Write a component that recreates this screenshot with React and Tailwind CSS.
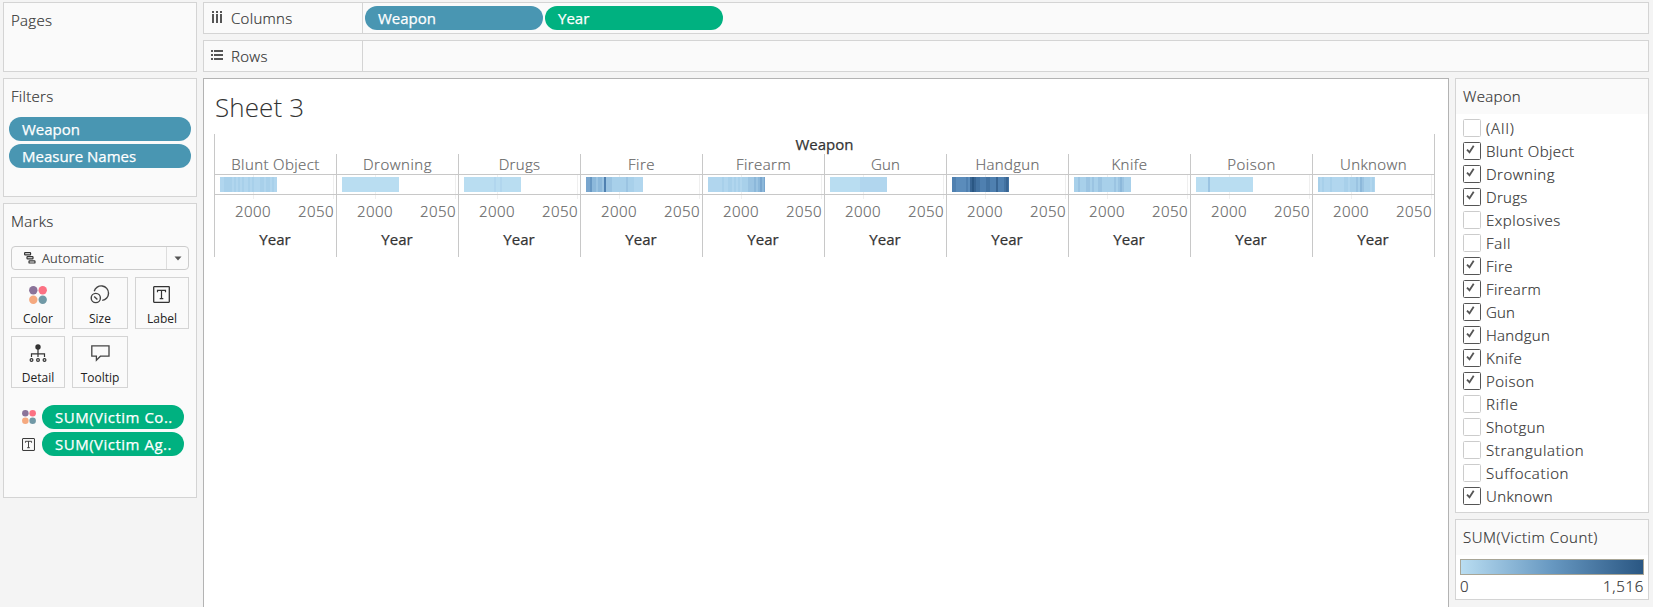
const LABELS = [
  ['Blunt Object', 0.4], ['Drowning', 0.5], ['Drugs', 0.3], ['Fire', 0.5], ['Firearm', 0.45],
  ['Gun', 0.1], ['Handgun', 0.3], ['Knife', 0.5], ['Poison', 0.5], ['Unknown', 0.4],
];

// Each strip: one letter per 2px slice, a step on the color ramp.
const RAMP = {
  a: '#b9ddf1', b: '#b1d6ee', c: '#a8d0ea', d: '#9bc4e2', e: '#8cb8da', f: '#79a6ce',
  g: '#6898c3', h: '#5b8cbb', i: '#4f80b0', j: '#4373a2', k: '#386593', l: '#2a5783',
};
const STRIPS = [
  'bbccccbcbcbcbbcbcbbbccbccbcbb',
  'aaaaaaaaaaaaaaaaaaaaaaaaaaaaa',
  'aaaaaaaaaaaaaaabaabaaaaaaaaaa',
  'ffgeedeedidddcccccccdcccbbbbb',
  'bbbbbbbcbbccbcbcbcccdddedefef',
  'aaaaaaaaaaaaaaabbbbbbbbbbbbbb',
  'iihhhhhihklkjjiiijjiiikiiijkj',
  'ccdcccddcdccddccccccdcdedcccc',
  'aaaaaadaaaaaaaaaaaaaaaaaaaaaa',
  'cbcbbbcbbbbbbccbcccdcedcccbcb',
];

// Name, checked, letter spacing in px.
const ITEMS = [
  ['(All)', 0, 1], ['Blunt Object', 1, 0.4], ['Drowning', 1, 0.5], ['Drugs', 1, 0.3], ['Explosives', 0, 0.55],
  ['Fall', 0, 0.7], ['Fire', 1, 0.5], ['Firearm', 1, 0.45], ['Gun', 1, 0.1], ['Handgun', 1, 0.3],
  ['Knife', 1, 0.5], ['Poison', 1, 0.5], ['Rifle', 0, 0.8], ['Shotgun', 0, 0.4], ['Strangulation', 0, 0.65],
  ['Suffocation', 0, 0.65], ['Unknown', 1, 0.4],
];

const PANEL = 'border border-[#d4d4d4] bg-[#fafafa]';
const BOOK = 'font-light [-webkit-text-stroke:0.2px]';
const HEADING = `leading-5 tracking-[0.3px] text-[#333] ${BOOK}`;

function Dots({ size }) {
  return (
    <svg width={size} height={size} viewBox="0 0 18 18">
      <circle cx="4.3" cy="4.3" r="4.2" fill="#8a7399" />
      <circle cx="13.7" cy="4.3" r="4.2" fill="#fc7183" />
      <circle cx="4.3" cy="13.7" r="4.2" fill="#f5a97f" />
      <circle cx="13.7" cy="13.7" r="4.2" fill="#7199a6" />
    </svg>
  );
}

function LabelIcon({ size }) {
  return (
    <svg width={size} height={size} viewBox="0 0 17 17" fill="none" stroke="#333">
      <rect x="0.7" y="0.7" width="15.6" height="15.6" rx="0.5" strokeWidth="1.3" />
      <path d="M4.5 6.2V4.3h8v1.9M8.5 4.3v8.4M6.7 12.7h3.6" strokeWidth="1.2" />
    </svg>
  );
}

function SizeIcon() {
  return (
    <svg width="20" height="19" viewBox="0 0 20 19" fill="none" stroke="#444" strokeWidth="1.4">
      <path d="M4.2 6.2A7.3 7.3 0 1 1 12.2 15.4" />
      <circle cx="5.8" cy="13" r="4.6" />
      <path d="M4.2 11.4l3.2 3.2" />
    </svg>
  );
}

function DetailIcon() {
  return (
    <svg width="18" height="19" viewBox="0 0 18 19" fill="none" stroke="#333" strokeWidth="1.2">
      <circle cx="9" cy="3" r="2.7" fill="#333" stroke="none" />
      <path d="M9 5v8M2.5 13V9.8h13V13" />
      <circle cx="2.5" cy="16" r="1.4" />
      <circle cx="9" cy="16" r="1.4" />
      <circle cx="15.5" cy="16" r="1.4" />
    </svg>
  );
}

function TooltipIcon() {
  return (
    <svg width="19" height="17" viewBox="0 0 19 17" fill="none" stroke="#444" strokeWidth="1.3">
      <path d="M.8 .8h17.2v10.4H9.4L5.4 15.2v-4H.8z" />
    </svg>
  );
}

function GanttIcon() {
  return (
    <svg width="12" height="12" viewBox="0 0 12 12" fill="none" stroke="#333" strokeWidth="1.2">
      <rect x=".6" y=".6" width="6" height="2.2" rx=".6" />
      <rect x="3" y="4.7" width="6" height="2.2" rx=".6" />
      <rect x="5" y="8.8" width="6" height="2.2" rx=".6" />
    </svg>
  );
}

function Pill({ children, className }) {
  return (
    <div className={`flex h-6 items-center rounded-full text-[15px] font-medium text-white [-webkit-text-stroke:0.25px] ${className}`}>
      <span className="whitespace-nowrap">{children}</span>
    </div>
  );
}

function MarkButton({ icon, label, className }) {
  return (
    <div className={`flex h-[52px] flex-col items-center border border-[#d4d4d4] bg-[#fafafa] ${className}`}>
      <div className="flex h-[33px] items-center justify-center">{icon}</div>
      <span className="text-xs leading-4 text-[#222]">{label}</span>
    </div>
  );
}

function Shelf({ icon, label, children }) {
  return (
    <div className={`flex h-8 w-[1446px] shrink-0 ${PANEL}`}>
      <div className="flex w-[159px] items-center border-r border-[#d4d4d4] pl-[7px]">
        <div className="-mt-0.5 w-5">{icon}</div>
        <span className={HEADING}>{label}</span>
      </div>
      <div className="flex items-center gap-0.5 pl-0.5">{children}</div>
    </div>
  );
}

function Pane({ label, spacing, strip }) {
  return (
    <div className="w-[122px] border-r border-[#c8c8c8]">
      <div
        className={`h-[21px] border-b border-[#c8c8c8] text-center text-[15px] leading-[21px] text-[#666] ${BOOK}`}
        style={{ letterSpacing: spacing }}
      >
        {label}
      </div>
      <svg className="block" width="121" height="24">
        <path d="M38.5 0v24M118.5 0v24" stroke="#efefef" />
        {[...strip].map((c, i) => (
          <rect key={i} x={5 + i * 2} y="2" width={i === 28 ? 1 : 2} height="15" fill={RAMP[c]} />
        ))}
        <path d="M0 19.5h121" stroke="#c8c8c8" />
      </svg>
      <div className={`flex h-6 items-center pl-[20px] text-[15px] leading-5 tracking-[0.4px] text-[#666] ${BOOK}`}>
        <span className="w-[63px]">2000</span>
        <span>2050</span>
      </div>
      <div className="h-[34px] pt-1.5 pr-px text-center text-[15px] leading-5 font-medium text-[#333] [-webkit-text-stroke:0.25px]">Year</div>
    </div>
  );
}

function CheckRow({ label, checked, spacing }) {
  return (
    <div className="flex h-[23px] items-center gap-[5px]">
      <svg width="18" height="18" viewBox="0 0 18 18" fill="none">
        <rect x=".5" y=".5" width="17" height="17" rx="1" fill="#fff" stroke={checked ? '#555' : '#ccc'} />
        {checked ? <path d="M4 7.6l2.5 2.6 4.2-6.4" stroke="#555" strokeWidth="1.8" /> : null}
      </svg>
      <span className={`text-[15px] leading-5 text-[#333] ${BOOK}`} style={{ letterSpacing: spacing }}>{label}</span>
    </div>
  );
}

export default function App() {
  return (
    <div className="flex h-[607px] w-[1653px] gap-[6px] overflow-hidden bg-[#f4f4f4] pt-0.5 pl-[3px] font-['Open_Sans',sans-serif] text-[15px] text-[#333]">
      <aside className="flex w-[194px] flex-col gap-[6px]">
        <section className={`h-[70px] pt-[7px] pl-[7px] ${PANEL}`}>
          <h2 className={HEADING}>Pages</h2>
        </section>
        <section className={`h-[119px] px-[5px] pt-[7px] ${PANEL}`}>
          <h2 className={`pl-0.5 ${HEADING}`}>Filters</h2>
          <div className="mt-[11px] flex flex-col gap-[3px]">
            <Pill className="bg-[#4996b2] pl-[13px]">Weapon</Pill>
            <Pill className="bg-[#4996b2] pl-[13px]">Measure Names</Pill>
          </div>
        </section>
        <section className={`h-[295px] px-[7px] pt-[7px] ${PANEL}`}>
          <h2 className={HEADING}>Marks</h2>
          <div className="mt-[15px] flex h-6 w-[178px] items-center rounded-sm border border-[#ccc] pl-3">
            <GanttIcon />
            <span className={`flex-1 pt-px pl-[6px] text-[13px] tracking-[0.3px] text-[#333] ${BOOK}`}>Automatic</span>
            <div className="flex h-full w-[22px] items-center justify-center border-l border-[#ddd]">
              <svg width="8" height="5"><path d="M0.5 0.5h7L4 4.5z" fill="#555" /></svg>
            </div>
          </div>
          <div className="mt-[7px] flex flex-wrap gap-x-[7px] gap-y-[7px]">
            <MarkButton className="w-[54px]" icon={<Dots size={18} />} label="Color" />
            <MarkButton className="w-[56px]" icon={<SizeIcon />} label="Size" />
            <MarkButton className="w-[54px]" icon={<div className="pr-px"><LabelIcon size={17} /></div>} label="Label" />
            <MarkButton className="w-[54px]" icon={<DetailIcon />} label="Detail" />
            <MarkButton className="w-[56px]" icon={<TooltipIcon />} label="Tooltip" />
          </div>
          <div className="mt-[17px] flex flex-col gap-[3px] pl-[11px]">
            <div className="flex items-center">
              <div className="w-5"><Dots size={14} /></div>
              <Pill className="w-[142px] bg-[#00b180] pl-[13px] tracking-[0.5px]">SUM(Victim Co..</Pill>
            </div>
            <div className="flex items-center">
              <div className="w-5"><LabelIcon size={13} /></div>
              <Pill className="w-[142px] bg-[#00b180] pl-[13px] tracking-[0.5px]">SUM(Victim Ag..</Pill>
            </div>
          </div>
        </section>
      </aside>
      <div className="flex flex-col gap-[6px]">
        <Shelf
          label="Columns"
          icon={<svg width="12" height="12"><path d="M2 0v2M6 0v2M10 0v2M2 3v9M6 3v9M10 3v9" stroke="#555" strokeWidth="2" /></svg>}
        >
          <Pill className="w-[178px] bg-[#4996b2] pl-[13px]">Weapon</Pill>
          <Pill className="w-[178px] bg-[#00b180] pl-[13px]">Year</Pill>
        </Shelf>
        <Shelf
          label="Rows"
          icon={<svg width="12" height="12"><path d="M0 2h2M0 6h2M0 10h2M3 2h9M3 6h9M3 10h9" stroke="#555" strokeWidth="2" /></svg>}
        />
        <div className="flex shrink-0 gap-[6px]">
          <main className="h-[540px] w-[1246px] border border-[#b3b3b3] bg-white pt-3 pl-[10px]">
            <h1 className="pl-[1px] text-[26px] leading-8 font-light tracking-[0.1px]">Sheet 3</h1>
            <div className="mt-[11px] w-[1221px] border-l border-[#c8c8c8]">
              <div className="h-5 border-r border-[#c8c8c8] text-center leading-5 font-medium [-webkit-text-stroke:0.25px]">Weapon</div>
              <div className="flex">
                {LABELS.map(([l, spacing], i) => <Pane key={l} label={l} spacing={spacing} strip={STRIPS[i]} />)}
              </div>
            </div>
          </main>
          <aside className="flex w-[194px] flex-col gap-[6px]">
            <section className="h-[435px] border border-[#d4d4d4] bg-white">
              <h2 className={`h-[35px] bg-[#fafafa] pt-[7px] pl-[7px] ${HEADING}`}>Weapon</h2>
              <div className="pt-[2px] pl-[7px]">
                {ITEMS.map(([l, c, s]) => <CheckRow key={l} label={l} checked={c} spacing={s} />)}
              </div>
            </section>
            <section className="h-[81px] border border-[#d4d4d4] bg-white">
              <h2 className={`h-[35px] bg-[#fafafa] pt-[7px] pl-[7px] leading-5 tracking-[0.55px] text-[#333] ${BOOK}`}>SUM(Victim Count)</h2>
              <div className="mx-1 mt-1 h-4 border border-[#a8a596] bg-linear-to-r from-[#b9ddf1] via-[#6798c1] to-[#2a5783]" />
              <div className={`flex justify-between px-1 pt-[1px] leading-5 tracking-[0.7px] text-[#333] ${BOOK}`}><span>0</span><span>1,516</span></div>
            </section>
          </aside>
        </div>
      </div>
    </div>
  );
}
